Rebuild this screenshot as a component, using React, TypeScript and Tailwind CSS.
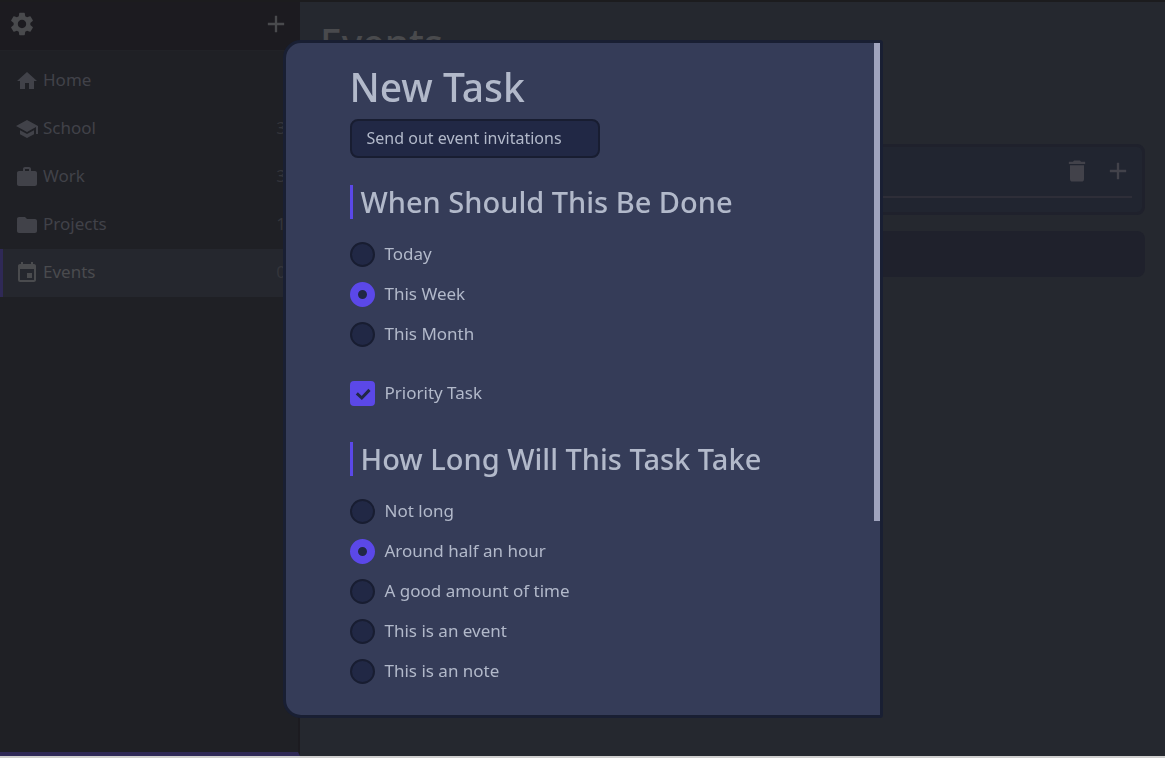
import { useEffect, useRef, useState } from "react";
import type { IconType } from "react-icons";
import {
  MdAdd,
  MdDelete,
  MdEvent,
  MdFolder,
  MdHome,
  MdSchool,
  MdSettings,
  MdWork,
} from "react-icons/md";

type Category = { name: string; icon: IconType; count?: number };

const categories: Category[] = [
  { name: "Home", icon: MdHome },
  { name: "School", icon: MdSchool, count: 3 },
  { name: "Work", icon: MdWork, count: 3 },
  { name: "Projects", icon: MdFolder, count: 1 },
  { name: "Events", icon: MdEvent, count: 0 },
];

const whenOptions = ["Today", "This Week", "This Month"];
const lengthOptions = [
  "Not long",
  "Around half an hour",
  "A good amount of time",
  "This is an event",
  "This is an note",
];

function Sidebar({ active }: { active: string }) {
  return (
    <aside className="flex w-[300px] shrink-0 flex-col border-r-2 border-b-4 border-r-[#1c1b20] border-b-[#2f2956] bg-[#1f2025]">
      <header className="flex h-[49px] items-center justify-between border-b border-[#212227] bg-[#1c1b20] px-2 pb-1 text-[#494a4d]">
        <button type="button" aria-label="Settings">
          <MdSettings size={28} />
        </button>
        <button type="button" aria-label="Add category">
          <MdAdd size={28} />
        </button>
      </header>
      <nav className="flex flex-col pt-1.5">
        {categories.map(({ name, icon: Icon, count }) => (
          <a
            key={name}
            href={"#" + name.toLowerCase()}
            className={
              name === active
                ? "flex h-12 items-center gap-1 border-l-[3px] border-[#2f2956] bg-[#25272e] pr-3 pl-3 text-[#4a4b4e]"
                : "flex h-12 items-center gap-1 border-l-[3px] border-transparent pr-3 pl-3 text-[#414249]"
            }
          >
            <Icon size={24} />
            <span className="pb-0.5">{name}</span>
            <span className="ml-auto pb-0.5 text-[#34353b]">{count}</span>
          </a>
        ))}
      </nav>
    </aside>
  );
}

function Board() {
  return (
    <main className="flex min-w-0 flex-1 flex-col px-5 pt-[18px]">
      <h1 className="text-[39px] leading-[46px] font-medium text-[#494a4d]">Events</h1>
      <section className="mt-[78px] rounded-lg border-[3px] border-[#1f212c] bg-[#212530] px-2.5 pt-2.5 pb-3.5">
        <div className="flex justify-end gap-[13px] border-b-2 border-[#2e2e38] pb-[11px] text-[#42424a]">
          <button type="button" aria-label="Delete">
            <MdDelete size={28} />
          </button>
          <button type="button" aria-label="Add task">
            <MdAdd size={28} />
          </button>
        </div>
      </section>
      <div className="mt-4 h-[46px] rounded-lg bg-[#1f212c]" />
    </main>
  );
}

function RadioGroup({
  title,
  name,
  options,
  initial,
}: {
  title: string;
  name: string;
  options: string[];
  initial: string;
}) {
  const [value, setValue] = useState(initial);
  return (
    <fieldset>
      <legend className="mb-[23px] border-l-[3px] border-[#5b48e8] pl-2 text-[29px] leading-[34px] font-medium">
        {title}
      </legend>
      <div className="flex flex-col gap-[15px]">
        {options.map((option) => (
          <label key={option} className="flex h-[25px] items-center gap-2.5">
            <input
              type="radio"
              name={name}
              checked={value === option}
              onChange={() => setValue(option)}
              className="size-[25px] shrink-0 appearance-none rounded-full border-2 border-[#181d31] bg-[#212845] checked:border-8 checked:border-[#5b48e8]"
            />
            <span className="pb-0.5">{option}</span>
          </label>
        ))}
      </div>
    </fieldset>
  );
}

function NewTaskDialog() {
  const [task, setTask] = useState("Send out event invitations");
  const [priority, setPriority] = useState(true);
  const formRef = useRef<HTMLFormElement>(null);
  const [thumb, setThumb] = useState({ top: 0, height: 0 });

  const updateThumb = () => {
    const form = formRef.current;
    if (!form) return;
    const { scrollTop, clientHeight, scrollHeight } = form;
    const ratio = clientHeight / scrollHeight;
    setThumb({
      top: Math.round(scrollTop * ratio),
      height: ratio < 1 ? Math.round(clientHeight * ratio) : 0,
    });
  };

  useEffect(() => {
    updateThumb();
    window.addEventListener("resize", updateThumb);
    return () => window.removeEventListener("resize", updateThumb);
  }, []);

  return (
    <div className="fixed inset-0 flex items-center justify-center py-10">
      <div
        role="dialog"
        aria-labelledby="dialog-title"
        className="relative h-full w-[600px] max-w-full overflow-hidden rounded-l-[18px] rounded-r-[3px] border-[3px] border-[#191f33] bg-[#353c58] text-[#b2b9ca]"
      >
        <form
          ref={formRef}
          onScroll={updateThumb}
          className="h-full overflow-y-auto px-16 pt-[21px] [scrollbar-width:none]"
        >
          <h2 id="dialog-title" className="text-[39px] leading-[46px] font-medium">
            New Task
          </h2>
          <input
            type="text"
            aria-label="Task name"
            value={task}
            onChange={(e) => setTask(e.target.value)}
            className="mt-[9px] mb-[27px] block h-[39px] w-[250px] rounded-lg border-2 border-[#181d31] bg-[#212845] px-[15px] pb-0.5 text-base outline-none"
          />
          <RadioGroup
            title="When Should This Be Done"
            name="when"
            options={whenOptions}
            initial="This Week"
          />
          <label className="mt-[34px] mb-9 flex h-[25px] items-center gap-2.5">
            <span className="grid size-[25px] shrink-0">
              <input
                type="checkbox"
                checked={priority}
                onChange={(e) => setPriority(e.target.checked)}
                className="col-start-1 row-start-1 size-[25px] appearance-none rounded border-2 border-[#181d31] bg-[#212845] checked:border-[#5b48e8] checked:bg-[#5b48e8]"
              />
              {priority && (
                <svg
                  viewBox="0 0 25 25"
                  className="pointer-events-none col-start-1 row-start-1 size-[25px]"
                  aria-hidden="true"
                >
                  <path d="M6.8 12.4l5 4.6 7.7-8.1" fill="none" stroke="#212845" strokeWidth="3" />
                </svg>
              )}
            </span>
            <span className="pb-0.5">Priority Task</span>
          </label>
          <RadioGroup
            title="How Long Will This Task Take"
            name="length"
            options={lengthOptions}
            initial="Around half an hour"
          />
          <div className="h-[304px]" />
        </form>
        <div
          className="pointer-events-none absolute right-0 w-1.5 bg-[#9fa3bd]"
          style={{ top: thumb.top, height: thumb.height }}
        />
      </div>
    </div>
  );
}

export default function App() {
  return (
    <div className="flex min-h-screen flex-col border-b-2 border-[#cfcfcf] bg-[#25282f] font-['Noto_Sans',sans-serif] text-[17px] leading-6">
      <div className="flex flex-1 border-t-2 border-[#1c1c1e]">
        <Sidebar active="Events" />
        <Board />
      </div>
      <NewTaskDialog />
    </div>
  );
}
